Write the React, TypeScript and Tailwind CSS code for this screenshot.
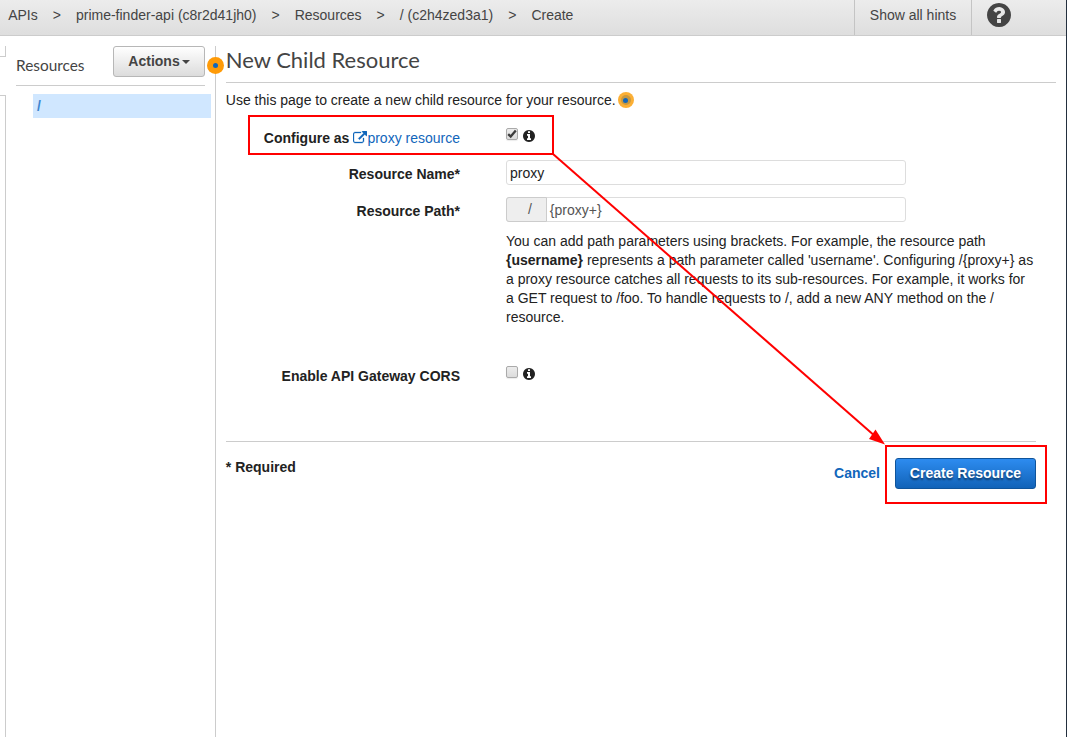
import type { ReactNode } from "react";

const CIRCLE =
  "M1664 896q0 209-103 385.5t-279.5 279.5-385.5 103-385.5-103-279.5-279.5-103-385.5 103-385.5 279.5-279.5 385.5-103 385.5 103 279.5 279.5 103 385.5z";

function InfoIcon() {
  return (
    <svg viewBox="0 0 1792 1792" className="size-3.5 text-[#222]" fill="currentColor">
      <path
        d={
          "M1152 1376v-160q0-14-9-23t-23-9h-96v-512q0-14-9-23t-23-9h-320q-14 0-23 9t-9 23v160q0 14 9 23t23 9h96v320h-96q-14 0-23 9t-9 23v160q0 14 9 23t23 9h448q14 0 23-9t9-23zM1024 480v-160q0-14-9-23t-23-9h-192q-14 0-23 9t-9 23v160q0 14 9 23t23 9h192q14 0 23-9t9-23z" +
          CIRCLE
        }
      />
    </svg>
  );
}

function HelpIcon() {
  return (
    <svg viewBox="0 0 1792 1792" className="size-7 text-[#444]" fill="currentColor">
      <path
        d={
          "M1024 1376v-192q0-14-9-23t-23-9h-192q-14 0-23 9t-9 23v192q0 14 9 23t23 9h192q14 0 23-9t9-23zM1280 704q0-88-55.5-163t-138.5-116-170-41q-243 0-371 213-15 24 8 42l132 100q7 6 19 6 16 0 25-12 53-68 86-92 34-24 86-24 48 0 85.5 26t37.5 59q0 38-20 61t-68 45q-63 28-115.5 86.5t-52.5 125.5v36q0 14 9 23t23 9h192q14 0 23-9t9-23q0-19 21.5-49.5t54.5-49.5q32-18 49-28.5t46-35 44.5-48 28-60.5 12.5-81z" +
          CIRCLE
        }
      />
    </svg>
  );
}

function ExternalLinkIcon() {
  return (
    <svg
      viewBox="0 0 1792 1792"
      className="size-3.5"
      fill="currentColor"
      stroke="currentColor"
      strokeWidth="40"
    >
      <path d="M1408 928v320q0 119-84.5 203.5t-203.5 84.5h-832q-119 0-203.5-84.5t-84.5-203.5v-832q0-119 84.5-203.5t203.5-84.5h704q14 0 23 9t9 23v64q0 14-9 23t-23 9h-704q-66 0-113 47t-47 113v832q0 66 47 113t113 47h832q66 0 113-47t47-113v-320q0-14 9-23t23-9h64q14 0 23 9t9 23zM1792 64v512q0 26-19 45t-45 19-45-19l-176-176-652 652q-10 10-23 10t-23-10l-114-114q-10-10-10-23t10-23l652-652-176-176q-19-19-19-45t19-45 45-19h512q26 0 45 19t19 45z" />
    </svg>
  );
}

function Checkbox({ checked = false }: { checked?: boolean }) {
  return (
    <span
      role="checkbox"
      aria-checked={checked}
      className="block size-3 rounded-[2px] border border-[#aaa] bg-linear-to-b from-[#ececec] to-[#dcdcdc] shadow-[0_1px_1px_rgba(0,0,0,0.08)]"
    >
      {checked && (
        <svg viewBox="0 0 10 10" className="size-2.5" fill="none" stroke="#3c3c3c" strokeWidth="2.3">
          <path d="M1.2 5.2 3.7 7.6 8.8 1.6" />
        </svg>
      )}
    </span>
  );
}

function Row({ label, className, children }: { label: ReactNode; className: string; children: ReactNode }) {
  return (
    <div className={"flex " + className}>
      <div className="flex w-[234px] shrink-0 items-center justify-end font-bold">{label}</div>
      <div className="ml-[46px] flex">{children}</div>
    </div>
  );
}

const crumbs = ["APIs", "prime-finder-api (c8r2d41jh0)", "Resources", "/ (c2h4zed3a1)", "Create"];

export default function App() {
  return (
    <div className="relative flex h-[737px] w-[1067px] flex-col overflow-hidden border-r border-[#232f3e] bg-white font-['Liberation_Sans',Arial,sans-serif] text-sm leading-[19px] whitespace-nowrap text-[#222]">
      <header className="flex h-9 shrink-0 border-b border-[#ccc] bg-linear-to-b from-[#ececec] to-[#dedede] text-[#444]">
        <nav className="flex flex-1 pt-[6px] pl-[8.2px]">
          {crumbs.map((crumb, i) => (
            <span key={crumb} className="flex">
              {i > 0 && <span className="mx-[15px]">&gt;</span>}
              <span>{crumb}</span>
            </span>
          ))}
        </nav>
        <div className="w-[118px] border-x border-[#c4c4c4] pt-[6px] text-center">Show all hints</div>
        <div className="w-[94px] pt-px pl-[13px]">
          <HelpIcon />
        </div>
      </header>

      <div className="flex min-h-0 flex-1 pt-[10px]">
        <div className="flex w-1.5 shrink-0 flex-col justify-between">
          <div className="h-[11px] border-r border-b border-[#ccc]" />
          <div className="h-[642px] border-t border-r border-[#ccc]" />
        </div>

        <aside className="relative w-[210px] shrink-0 border-r border-[#ccc]">
          <div className="mr-[10px] ml-[10px] flex h-10 justify-between border-b border-[#ccc]">
            <h2 className="pt-[10px] font-['Lato',sans-serif] text-[15.4px] leading-[19px] text-[#444]">Resources</h2>
            <button className="flex h-[31px] w-[92px] items-center justify-center gap-0.5 rounded-[3px] border border-[#b7b7b7] bg-linear-to-b from-white to-[#dcdcdc] font-bold text-[#444]">
              Actions
              <svg viewBox="0 0 8 4" className="mt-px h-1 w-2" fill="#444">
                <path d="M0 0h8L4 4z" />
              </svg>
            </button>
          </div>
          <div className="mt-2 mr-1 ml-[27px] h-6 bg-[#d0e7ff] pt-[3px] pl-1 font-bold text-[#3d85cf]">/</div>
          <span className="absolute top-[11px] -right-[9px] flex size-[17px] items-center justify-center rounded-full bg-[#ff9b08]">
            <span className="size-[5px] rounded-full bg-[#1166bb]" />
          </span>
        </aside>

        <main className="flex-1 pr-[10px] pl-[10px]">
          <h1 className="-ml-[0.3px] h-[37px] border-b border-[#ccc] font-['Lato',sans-serif] text-[22px] leading-[28px] text-[#444]">
            New Child Resource
          </h1>
          <p className="-ml-[0.2px] flex h-[34px] items-center gap-0.5">
            Use this page to create a new child resource for your resource.
            <span className="flex size-4 items-center justify-center rounded-full bg-[#fbaf35]">
              <span className="flex size-[10px] items-center justify-center rounded-full bg-[#c89840]">
                <span className="size-[5px] rounded-full bg-[#1166bb]" />
              </span>
            </span>
          </p>

          <Row
            className="h-10 pt-0.5"
            label={
              <span className="flex items-center gap-1">
                Configure as
                <a className="flex items-center font-normal text-[#1166bb]">
                  <ExternalLinkIcon />
                  proxy resource
                </a>
              </span>
            }
          >
            <div className="flex gap-1 pt-[9px]">
              <Checkbox checked />
              <span className="pt-px">
                <InfoIcon />
              </span>
            </div>
          </Row>
          <Row className="mt-[3px] h-7" label="Resource Name*">
            <div className="flex h-[25px] w-[400px] items-center rounded-[3px] border border-[#ddd] pt-0.5 pl-[3px]">
              proxy
            </div>
          </Row>
          <Row className="mt-[9px] h-7" label="Resource Path*">
            <div className="flex h-[25px] w-[400px] rounded-[3px] border border-[#ddd] text-[#555]">
              <span className="-my-px -ml-px flex w-[41px] items-center rounded-l-[3px] border border-[#ccc] bg-[#eee] pl-[21px]">
                /
              </span>
              <span className="flex items-center pt-0.5 pl-[2.8px]">{"{proxy+}"}</span>
            </div>
          </Row>
          <p className="mt-[7px] ml-[280px] h-[95px] w-[530px] whitespace-normal">
            You can add path parameters using brackets. For example, the resource path <b>{"{username}"}</b>
            {
              " represents a path parameter called 'username'. Configuring /{proxy+} as a proxy resource catches all requests to its sub-resources. For example, it works for a GET request to /foo. To handle requests to /, add a new ANY method on the / resource."
            }
          </p>
          <Row className="mt-[39px] h-[21px]" label="Enable API Gateway CORS">
            <div className="flex gap-1">
              <Checkbox />
              <span className="pt-px">
                <InfoIcon />
              </span>
            </div>
          </Row>

          <footer className="mt-[54px] mr-5 flex justify-between border-t border-[#ccc] pt-4 font-bold">
            <span className="-ml-[0.2px]">* Required</span>
            <div className="flex items-center gap-[15px]">
              <a className="text-[#1166bb]">Cancel</a>
              <button className="h-[31px] w-[141px] rounded-[3px] border border-[#0f549b] bg-linear-to-b from-[#2d8cf0] to-[#1163b8] text-white [text-shadow:0_2px_2px_rgba(0,0,0,0.5)]">
                Create Resource
              </button>
            </div>
          </footer>
        </main>
      </div>

      <svg
        viewBox="0 0 1067 737"
        className="pointer-events-none absolute top-0 left-0 h-[737px] w-[1067px]"
        fill="none"
        stroke="#ff0000"
        strokeWidth="2"
      >
        <rect x="249" y="116" width="304" height="38" />
        <rect x="886" y="446" width="160" height="57" />
        <path d="M553 154 876 437" />
        <path d="M885 444.500 869 439 875.500 429.500z" fill="#ff0000" stroke="none" />
      </svg>
    </div>
  );
}
